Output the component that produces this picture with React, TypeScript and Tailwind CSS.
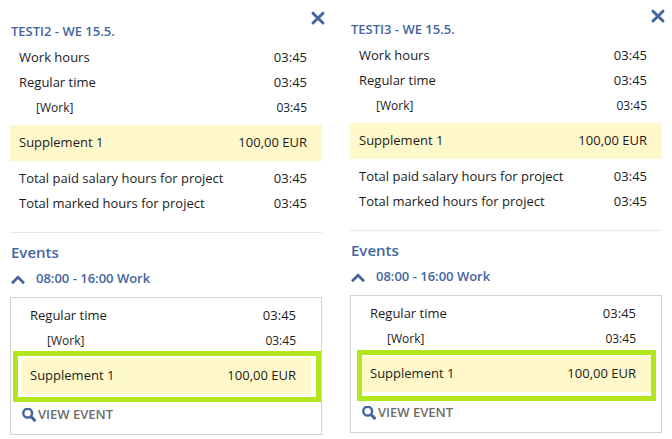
import type { ReactNode } from "react";

type RowProps = { label: string; value: string; sub?: boolean };

function Row({ label, value, sub = false }: RowProps) {
  return (
    <div
      className={
        sub
          ? "flex h-[25px] items-center justify-between pr-[15px] pl-[26px] text-[12px]"
          : "flex h-[25px] items-center justify-between pr-[15px] pl-[9px]"
      }
    >
      <dt>{label}</dt>
      <dd>{value}</dd>
    </div>
  );
}

function Supplement({ children }: { children?: ReactNode }) {
  return (
    <div className="relative mt-[5px] flex h-9 items-center justify-between bg-[#fef8cb] pr-[15px] pl-[9px]">
      <dt>Supplement 1</dt>
      <dd>100,00 EUR</dd>
      {children}
    </div>
  );
}

function CloseIcon() {
  return (
    <svg className="size-4" viewBox="0 0 16 16" fill="none" stroke="currentColor" strokeWidth="3" strokeLinecap="round" aria-hidden="true">
      <path d="M3 3.2 13 13M13 3.2 3 13" />
    </svg>
  );
}

function ChevronIcon() {
  return (
    <svg className="size-4" viewBox="0 0 16 16" fill="none" stroke="currentColor" strokeWidth="2.7" aria-hidden="true">
      <path d="M2 12.2 8 6.2 14 12.2" />
    </svg>
  );
}

function SearchIcon() {
  return (
    <svg className="size-3.5 text-[#44659f]" viewBox="0 0 14 14" fill="none" stroke="currentColor" aria-hidden="true">
      <circle cx="5.7" cy="5.2" r="4.4" strokeWidth="2.5" />
      <path d="M9.2 8.8 12.5 12.1" strokeWidth="3" strokeLinecap="round" />
    </svg>
  );
}

type PanelProps = { title: string; className: string; frame: string };

function Panel({ title, className, frame }: PanelProps) {
  return (
    <section className={className}>
      <header className="flex h-[35px] items-start justify-between text-[#44659f]">
        <h2 className="mt-[11px] pl-px leading-5 font-semibold">{title}</h2>
        <button type="button" aria-label="Close" className="-mr-1">
          <CloseIcon />
        </button>
      </header>

      <dl>
        <Row label="Work hours" value="03:45" />
        <Row label="Regular time" value="03:45" />
        <Row label="[Work]" value="03:45" sub />
        <Supplement />
        <div className="mt-[5px] border-b border-[#e9e9e9] pb-4">
          <Row label="Total paid salary hours for project" value="03:45" />
          <Row label="Total marked hours for project" value="03:45" />
        </div>
      </dl>

      <h3 className="mt-[7px] pl-px text-[15px] leading-6 font-semibold text-[#44659f]">Events</h3>
      <button type="button" aria-expanded="true" className="mt-[5px] flex h-5 items-center gap-2.5 font-semibold text-[#44659f]">
        <ChevronIcon />
        08:00 - 16:00 Work
      </button>

      <div className="mt-2 border border-[#d3d3d3] px-2.5 pt-[5px] pb-[9px]">
        <dl>
          <Row label="Regular time" value="03:45" />
          <Row label="[Work]" value="03:45" sub />
          <Supplement>
            <span className={frame} />
          </Supplement>
        </dl>
        <button type="button" className="mt-[11px] ml-px flex h-5 items-center gap-0.5 font-semibold text-[#6c6c6c]">
          <SearchIcon />
          VIEW EVENT
        </button>
      </div>
    </section>
  );
}

export default function App() {
  return (
    <main className="grid min-h-screen grid-cols-2 items-start gap-7 bg-white px-2.5 font-['Open_Sans',sans-serif] text-[13px] text-[#1c1c1c]">
      <Panel
        title="TESTI2 - WE 15.5."
        className="pt-2.5"
        frame="pointer-events-none absolute -top-[7px] -right-2.5 -bottom-2 -left-2 border-[5px] border-[#b3e61d]"
      />
      <Panel
        title="TESTI3 - WE 15.5."
        className="pt-2"
        frame="pointer-events-none absolute -top-1.5 -right-[5px] -bottom-[9px] -left-1 border-[5px] border-[#b3e61d]"
      />
    </main>
  );
}
